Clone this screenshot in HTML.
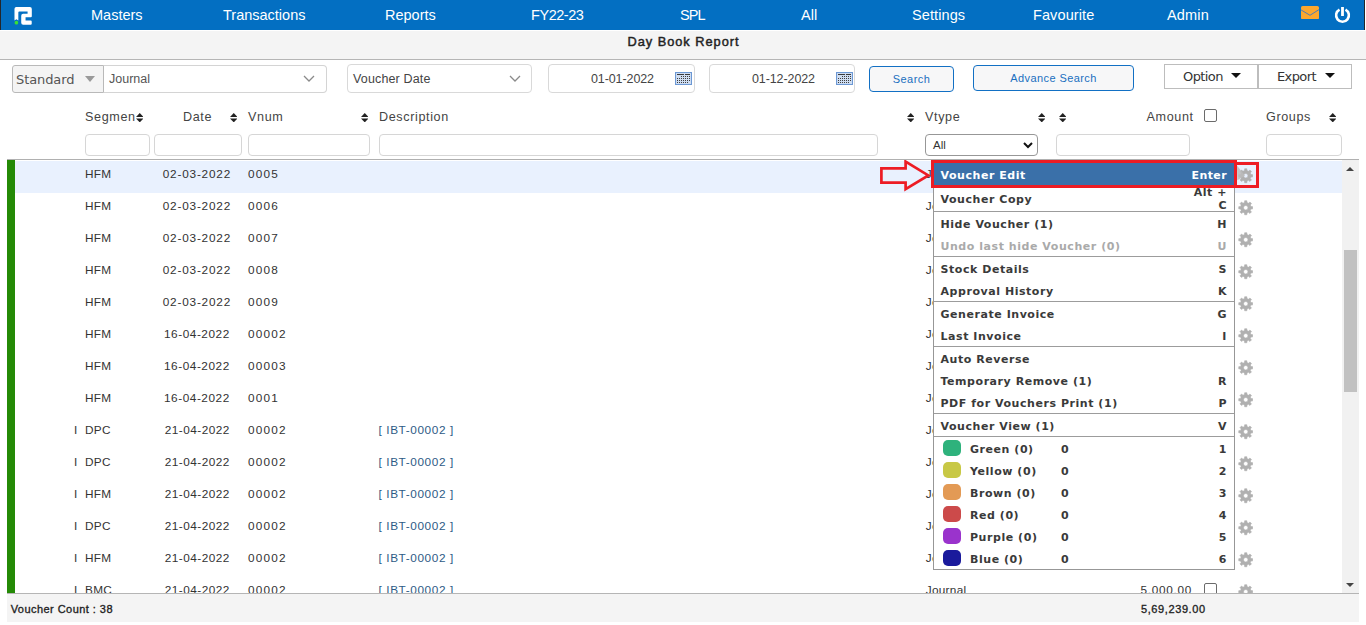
<!DOCTYPE html>
<html lang="en">
<head>
<meta charset="utf-8">
<title>Day Book Report</title>
<style>
*{box-sizing:border-box}
html,body{margin:0;padding:0}
body{width:1366px;height:625px;overflow:hidden;background:#fff;position:relative;font-family:"Liberation Sans",sans-serif;color:#333;font-size:12px}
.abs{position:absolute}
/* nav */
.nav{position:absolute;left:0;top:0;width:1365px;height:30px;background:#036fc2;border-left:1px solid #23262b;border-right:1px solid #23262b}
.nav span{position:absolute;top:0;height:30px;line-height:30px;color:#fff;font-size:14.5px;white-space:nowrap}
.nav svg{position:absolute}
.title{position:absolute;left:0;top:31px;width:1366px;height:29px;background:#f4f4f4;border-bottom:1px solid #b5b5b5;text-align:center;font-size:12.8px;letter-spacing:.98px;-webkit-text-stroke:.45px #222;line-height:22px;color:#222;padding-left:1px}
/* toolbar */
.box{position:absolute;border:1px solid #d4d4d4;border-radius:4px;background:#fff;height:28px;top:65px;font-size:12.5px;line-height:26px;color:#444;white-space:nowrap}
.std{left:12px;width:92px;background:#f4f4f4;border-color:#b9b9b9;border-radius:3px 0 0 3px;font-family:"DejaVu Sans",sans-serif;font-size:13px;padding-left:3px;letter-spacing:-.1px;color:#555;line-height:27px}
.chev{position:absolute;top:9px;width:10px;height:8px}
.btn{position:absolute;border:1px solid #1270c4;border-radius:4px;background:#f7f7f8;color:#1a6fc0;text-align:center;font-size:11px;letter-spacing:.42px;white-space:nowrap}
.obtn{position:absolute;top:64px;height:25px;border:1px solid #bdbdbd;background:#fff;font-family:"DejaVu Sans",sans-serif;font-size:13px;line-height:23px;color:#333;white-space:nowrap;letter-spacing:-.6px}
.obtn i{position:absolute;top:8px;width:0;height:0;border-left:5px solid transparent;border-right:5px solid transparent;border-top:5.500px solid #111}
.cal{position:absolute;top:7px;width:17px;height:13px}
/* header */
.h{position:absolute;top:108px;height:18px;line-height:18.500px;font-size:12.600px;color:#444;white-space:nowrap;letter-spacing:.62px}
.sort{position:absolute;top:113px;width:7.500px;height:9.400px}
.f{position:absolute;top:134px;height:22px;border:1px solid #d6d6d6;border-radius:4px;background:#fff}
.hline{position:absolute;left:7px;top:159px;width:1352px;height:1px;background:#b0b0b0}
.hcb{position:absolute;left:1204px;top:109px;width:13px;height:13px;border:1px solid #6b6b6b;border-radius:2px;background:#fff}
/* grid */
.grid{position:absolute;left:7px;top:160px;width:1335px;height:433px;overflow:hidden}
.gbar{position:absolute;left:0;top:0;width:8px;height:433px;background:#248a06}
.row{position:absolute;left:8px;width:1327px;height:32px}
.row.sel{background:linear-gradient(#fff 0,#fff 1px,#e9f1fe 1px);height:33px}
.c{position:absolute;top:6px;height:16px;line-height:16px;font-size:11.8px;color:#333;white-space:nowrap}
.pre{left:59px}
.seg{left:70px;letter-spacing:.3px}
.dt{left:131.500px;width:100px;text-align:center;letter-spacing:.8px;padding-left:.8px}
.dt.d16{letter-spacing:.55px;padding-left:.8px}
.dt.d21{letter-spacing:.47px;padding-left:1.500px}
.vn{left:233px;letter-spacing:1.2px}
.ds{left:363.500px;color:#2e5b86;letter-spacing:.6px}
.vt{left:910.700px;letter-spacing:.3px}
.am{right:150px;text-align:right;letter-spacing:.7px}
.cb{position:absolute;left:1189px;top:7px;width:13px;height:13px;border:1px solid #6b6b6b;border-radius:2px;background:#fff}
.gear{position:absolute;left:1222.600px;top:8px;width:15.500px;height:15.500px}
/* scrollbar */
.sb{position:absolute;left:1342px;top:160px;width:17px;height:433px;background:#f1f1f1}
.sb b{position:absolute;left:2px;top:90px;width:13px;height:142px;background:#c1c1c1}
.sb i{position:absolute;left:4px;width:0;height:0;border-left:4.5px solid transparent;border-right:4.5px solid transparent}
.sb i.u{top:7px;border-bottom:4.500px solid #444}
.sb i.d{bottom:6px;border-top:4.500px solid #444}
/* footer */
.foot{position:absolute;left:7px;top:593px;width:1352px;height:29px;background:#f4f4f4;border-top:1px solid #b5b5b5;font-size:11px;-webkit-text-stroke:.32px #222;color:#222}
.foot span{position:absolute;top:0;line-height:30px;white-space:nowrap}
/* context menu */
.menu{position:absolute;left:933px;top:162px;width:302px;height:408px;background:#fff;border:1px solid #979797;font-family:"DejaVu Sans",sans-serif;font-weight:bold;font-size:11px;letter-spacing:.55px;color:#3a3a3a}
.mi{position:absolute;left:0;width:300px;height:22px;line-height:22px;white-space:nowrap}
.mi .l{position:absolute;left:6.5px;top:1px}
.mi .k{position:absolute;right:7px;top:1px;text-align:right}
.mi.hi{background:#3a70a9;color:#fff}
.mi.dis{color:#aaa}
.sep{position:absolute;left:0;width:300px;height:1px;background:#9c9c9c}
.sw{position:absolute;left:9px;top:2px;width:18px;height:16px;border-radius:5px}
.mi .l2{position:absolute;left:36px;top:1px}
.mi .n{position:absolute;left:127px;top:1px}
/* annotations */
.red{position:absolute;border:3px solid #ed1c24}

.box.t{top:64px;height:29px;line-height:28px;border-color:#d9d9d9}

</style>
</head>
<body>
<svg width="0" height="0" style="position:absolute">
<defs>
<path id="g" fill="#b0b0b0" fill-rule="evenodd" stroke="#b0b0b0" stroke-width=".6" stroke-linejoin="round" d="M6.72 2.65 L6.86 0.79 L9.14 0.79 L9.28 2.65 L10.87 3.31 L12.29 2.09 L13.91 3.71 L12.69 5.13 L13.35 6.72 L15.21 6.86 L15.21 9.14 L13.35 9.28 L12.69 10.87 L13.91 12.29 L12.29 13.91 L10.87 12.69 L9.28 13.35 L9.14 15.21 L6.86 15.21 L6.72 13.35 L5.13 12.69 L3.71 13.91 L2.09 12.29 L3.31 10.87 L2.65 9.28 L0.79 9.14 L0.79 6.86 L2.65 6.72 L3.31 5.13 L2.09 3.71 L3.71 2.09 L5.13 3.31Z M5.70 8a2.3 2.3 0 1 0 4.6 0a2.3 2.3 0 1 0 -4.6 0z"/>
<g id="sarrow"><path d="M4 0 8 4.200H0z" fill="#222"/><path d="M0 5.800h8L4 10z" fill="#222"/></g>
</defs>
</svg>
<div class="nav">
<svg style="left:13px;top:7px" width="18.300" height="17.700" viewBox="0 0 19 18" preserveAspectRatio="none"><path d="M2 0h14.500a2 2 0 0 1 2 2v7.500a1 1 0 0 1-1 1H12v3.200h5.400a1 1 0 0 1 1 1V17a1 1 0 0 1-1 1H9.500a2 2 0 0 1-2-2V8.800a2 2 0 0 1 2-2h4.600V4.500H5.500a1 1 0 0 0-1 1v8.200l-2-1.300-2 1.300V2A2 2 0 0 1 2 0z" fill="#fff"/><circle cx="2.500" cy="16" r="1.900" fill="#3be034"/></svg>
<span style="left:90px">Masters</span>
<span style="left:222px">Transactions</span>
<span style="left:384px">Reports</span>
<span style="left:530px;letter-spacing:-.45px">FY22-23</span>
<span style="left:679px;letter-spacing:-.9px">SPL</span>
<span style="left:800px">All</span>
<span style="left:911px;letter-spacing:.1px">Settings</span>
<span style="left:1032px;letter-spacing:.1px">Favourite</span>
<span style="left:1166px;letter-spacing:.15px">Admin</span>
<svg style="left:1300px;top:5.600px" width="18" height="13.400" viewBox="0 0 18 13.400"><rect width="18" height="13.400" rx="1.600" fill="#fca72e"/><path d="M0 3.900 9 9.300 18 3.600" fill="none" stroke="#3a78c4" stroke-width=".9"/></svg>
<svg style="left:1333px;top:6px" width="17" height="18" viewBox="0 0 17 18"><path d="M5.500 3.650A6.400 6.400 0 1 0 11.500 3.650" fill="none" stroke="#fff" stroke-width="2.600"/><rect x="7.100" y="1" width="2.800" height="9" fill="#fff"/></svg>
</div>
<div class="title">Day Book Report</div>

<div class="box std">Standard<svg class="chev" style="left:72px;top:10px" viewBox="0 0 10 8"><path d="M0 0h10L5 6z" fill="#9a9a9a"/></svg></div>
<div class="box" style="left:104px;width:223px;padding-left:5px;border-radius:0 4px 4px 0;border-left:0;color:#555">Journal<svg class="chev" style="left:199px;top:9px;width:12px" viewBox="0 0 12 8"><path d="M1 1l5 5 5-5" fill="none" stroke="#8a8a8a" stroke-width="1.300"/></svg></div>
<div class="box t" style="left:347px;width:185px;padding-left:5px;letter-spacing:.15px">Voucher Date<svg class="chev" style="left:161px;top:10px;width:12px" viewBox="0 0 12 8"><path d="M1 1l5 5 5-5" fill="none" stroke="#8a8a8a" stroke-width="1.300"/></svg></div>
<div class="box t" style="left:548px;width:147px;padding-left:42px;letter-spacing:-.1px">01-01-2022<svg class="cal" style="left:126px" viewBox="0 0 17 13"><rect x=".5" y=".5" width="16" height="12" fill="#cddcf1" stroke="#6c98d4"/><path d="M2 2.500h7M10 2.500h5" stroke="#3a3a3a" stroke-width="1" fill="none"/><path d="M6 4.500h10M2 6.500h14M2 8.500h14M2 10.500h12" stroke="#3f3f3f" stroke-width="1" stroke-dasharray="1 1" fill="none"/></svg></div>
<div class="box t" style="left:709px;width:146px;padding-left:42px;letter-spacing:-.1px">01-12-2022<svg class="cal" style="left:126px" viewBox="0 0 17 13"><rect x=".5" y=".5" width="16" height="12" fill="#cddcf1" stroke="#6c98d4"/><path d="M2 2.500h7M10 2.500h5" stroke="#3a3a3a" stroke-width="1" fill="none"/><path d="M6 4.500h10M2 6.500h14M2 8.500h14M2 10.500h12" stroke="#3f3f3f" stroke-width="1" stroke-dasharray="1 1" fill="none"/></svg></div>
<div class="btn" style="left:869px;top:66px;width:85px;height:26px;line-height:25px">Search</div>
<div class="btn" style="left:973px;top:65px;width:161px;height:26px;line-height:24.500px">Advance Search</div>
<div class="obtn" style="left:1164px;width:94px;padding-left:18px">Option<i style="left:66px"></i></div>
<div class="obtn" style="left:1258px;width:94px;padding-left:18px">Export<i style="left:66px"></i></div>

<span class="h" style="left:85px">Segmen</span>
<span class="h" style="left:183px">Date</span>
<span class="h" style="left:248px">Vnum</span>
<span class="h" style="left:379px">Description</span>
<span class="h" style="left:925px">Vtype</span>
<span class="h" style="left:1146.500px">Amount</span>
<span class="h" style="left:1266px">Groups</span>
<svg class="sort" style="left:135.700px" viewBox="0 0 8 10"><use href="#sarrow"/></svg>
<svg class="sort" style="left:229.700px" viewBox="0 0 8 10"><use href="#sarrow"/></svg>
<svg class="sort" style="left:360.500px" viewBox="0 0 8 10"><use href="#sarrow"/></svg>
<svg class="sort" style="left:906.700px" viewBox="0 0 8 10"><use href="#sarrow"/></svg>
<svg class="sort" style="left:1037.700px" viewBox="0 0 8 10"><use href="#sarrow"/></svg>
<svg class="sort" style="left:1058.700px" viewBox="0 0 8 10"><use href="#sarrow"/></svg>
<svg class="sort" style="left:1328.700px" viewBox="0 0 8 10"><use href="#sarrow"/></svg>
<span class="hcb"></span>
<div class="f" style="left:85px;width:65px"></div>
<div class="f" style="left:154px;width:88px"></div>
<div class="f" style="left:248px;width:122px"></div>
<div class="f" style="left:379px;width:499px"></div>
<div class="f" style="left:925px;width:113px;border-color:#979797;font-size:11.500px;line-height:20px;padding-left:7px;color:#333">All<svg class="abs" style="left:97px;top:6.500px" width="10" height="7" viewBox="0 0 10 7"><path d="M1 1l4 4 4-4" fill="none" stroke="#111" stroke-width="2"/></svg></div>
<div class="f" style="left:1056px;width:134px"></div>
<div class="f" style="left:1266px;width:76px"></div>
<div class="hline"></div>
<div class="grid">
<div class="gbar"></div>
<div class="row sel" style="top:0px"><span class="c seg">HFM</span><span class="c dt">02-03-2022</span><span class="c vn">0005</span><span class="c vt">Journal</span><span class="c am">5,000.00</span><span class="cb"></span><svg class="gear" viewBox="0 0 16 16"><use href="#g"/></svg></div>
<div class="row" style="top:32px"><span class="c seg">HFM</span><span class="c dt">02-03-2022</span><span class="c vn">0006</span><span class="c vt">Journal</span><span class="c am">5,000.00</span><span class="cb"></span><svg class="gear" viewBox="0 0 16 16"><use href="#g"/></svg></div>
<div class="row" style="top:64px"><span class="c seg">HFM</span><span class="c dt">02-03-2022</span><span class="c vn">0007</span><span class="c vt">Journal</span><span class="c am">5,000.00</span><span class="cb"></span><svg class="gear" viewBox="0 0 16 16"><use href="#g"/></svg></div>
<div class="row" style="top:96px"><span class="c seg">HFM</span><span class="c dt">02-03-2022</span><span class="c vn">0008</span><span class="c vt">Journal</span><span class="c am">5,000.00</span><span class="cb"></span><svg class="gear" viewBox="0 0 16 16"><use href="#g"/></svg></div>
<div class="row" style="top:128px"><span class="c seg">HFM</span><span class="c dt">02-03-2022</span><span class="c vn">0009</span><span class="c vt">Journal</span><span class="c am">5,000.00</span><span class="cb"></span><svg class="gear" viewBox="0 0 16 16"><use href="#g"/></svg></div>
<div class="row" style="top:160px"><span class="c seg">HFM</span><span class="c dt d16">16-04-2022</span><span class="c vn">00002</span><span class="c vt">Journal</span><span class="c am">5,000.00</span><span class="cb"></span><svg class="gear" viewBox="0 0 16 16"><use href="#g"/></svg></div>
<div class="row" style="top:192px"><span class="c seg">HFM</span><span class="c dt d16">16-04-2022</span><span class="c vn">00003</span><span class="c vt">Journal</span><span class="c am">5,000.00</span><span class="cb"></span><svg class="gear" viewBox="0 0 16 16"><use href="#g"/></svg></div>
<div class="row" style="top:224px"><span class="c seg">HFM</span><span class="c dt d16">16-04-2022</span><span class="c vn">0001</span><span class="c vt">Journal</span><span class="c am">5,000.00</span><span class="cb"></span><svg class="gear" viewBox="0 0 16 16"><use href="#g"/></svg></div>
<div class="row" style="top:256px"><span class="c pre">I</span><span class="c seg">DPC</span><span class="c dt d21">21-04-2022</span><span class="c vn">00002</span><span class="c ds">[ IBT-00002 ]</span><span class="c vt">Journal</span><span class="c am">5,000.00</span><span class="cb"></span><svg class="gear" viewBox="0 0 16 16"><use href="#g"/></svg></div>
<div class="row" style="top:288px"><span class="c pre">I</span><span class="c seg">DPC</span><span class="c dt d21">21-04-2022</span><span class="c vn">00002</span><span class="c ds">[ IBT-00002 ]</span><span class="c vt">Journal</span><span class="c am">5,000.00</span><span class="cb"></span><svg class="gear" viewBox="0 0 16 16"><use href="#g"/></svg></div>
<div class="row" style="top:320px"><span class="c pre">I</span><span class="c seg">HFM</span><span class="c dt d21">21-04-2022</span><span class="c vn">00002</span><span class="c ds">[ IBT-00002 ]</span><span class="c vt">Journal</span><span class="c am">5,000.00</span><span class="cb"></span><svg class="gear" viewBox="0 0 16 16"><use href="#g"/></svg></div>
<div class="row" style="top:352px"><span class="c pre">I</span><span class="c seg">DPC</span><span class="c dt d21">21-04-2022</span><span class="c vn">00002</span><span class="c ds">[ IBT-00002 ]</span><span class="c vt">Journal</span><span class="c am">5,000.00</span><span class="cb"></span><svg class="gear" viewBox="0 0 16 16"><use href="#g"/></svg></div>
<div class="row" style="top:384px"><span class="c pre">I</span><span class="c seg">HFM</span><span class="c dt d21">21-04-2022</span><span class="c vn">00002</span><span class="c ds">[ IBT-00002 ]</span><span class="c vt">Journal</span><span class="c am">5,000.00</span><span class="cb"></span><svg class="gear" viewBox="0 0 16 16"><use href="#g"/></svg></div>
<div class="row" style="top:416px"><span class="c pre">I</span><span class="c seg">BMC</span><span class="c dt d21">21-04-2022</span><span class="c vn">00002</span><span class="c ds">[ IBT-00002 ]</span><span class="c vt">Journal</span><span class="c am">5,000.00</span><span class="cb"></span><svg class="gear" viewBox="0 0 16 16"><use href="#g"/></svg></div>
</div>
<div class="sb"><i class="u"></i><b></b><i class="d"></i></div>
<div class="foot"><span style="left:3.700px;letter-spacing:.45px">Voucher Count : 38</span><span style="left:1134px;letter-spacing:.6px">5,69,239.00</span></div>

<div class="menu">
<div class="mi hi" style="top:0;height:24px;line-height:23px"><span class="l">Voucher Edit</span><span class="k" style="letter-spacing:.4px">Enter</span></div>
<div class="mi" style="top:24px;height:24px;line-height:24px"><span class="l">Voucher Copy</span><span class="k" style="top:0;line-height:12.500px;width:40px;white-space:normal">Alt + C</span></div>
<div class="sep" style="top:48px"></div>
<div class="mi" style="top:50px"><span class="l">Hide Voucher (1)</span><span class="k">H</span></div>
<div class="mi dis" style="top:72px"><span class="l">Undo last hide Voucher (0)</span><span class="k">U</span></div>
<div class="sep" style="top:93px"></div>
<div class="mi" style="top:95px"><span class="l">Stock Details</span><span class="k">S</span></div>
<div class="mi" style="top:117px"><span class="l">Approval History</span><span class="k">K</span></div>
<div class="sep" style="top:138px"></div>
<div class="mi" style="top:140px"><span class="l">Generate Invoice</span><span class="k">G</span></div>
<div class="mi" style="top:162px"><span class="l">Last Invoice</span><span class="k">I</span></div>
<div class="sep" style="top:183px"></div>
<div class="mi" style="top:185px"><span class="l">Auto Reverse</span></div>
<div class="mi" style="top:207px"><span class="l">Temporary Remove (1)</span><span class="k">R</span></div>
<div class="mi" style="top:229px"><span class="l">PDF for Vouchers Print (1)</span><span class="k">P</span></div>
<div class="sep" style="top:250px"></div>
<div class="mi" style="top:252px"><span class="l">Voucher View (1)</span><span class="k">V</span></div>
<div class="sep" style="top:273px"></div>
<div class="mi" style="top:275px"><i class="sw" style="background:#2eb27c"></i><span class="l2">Green (0)</span><span class="n">0</span><span class="k">1</span></div>
<div class="mi" style="top:297px"><i class="sw" style="background:#c8c845"></i><span class="l2">Yellow (0)</span><span class="n">0</span><span class="k">2</span></div>
<div class="mi" style="top:319px"><i class="sw" style="background:#e39a55"></i><span class="l2">Brown (0)</span><span class="n">0</span><span class="k">3</span></div>
<div class="mi" style="top:341px"><i class="sw" style="background:#cc4a4a"></i><span class="l2">Red (0)</span><span class="n">0</span><span class="k">4</span></div>
<div class="mi" style="top:363px"><i class="sw" style="background:#9a33cc"></i><span class="l2">Purple (0)</span><span class="n">0</span><span class="k">5</span></div>
<div class="mi" style="top:385px"><i class="sw" style="background:#1a1a9c"></i><span class="l2">Blue (0)</span><span class="n">0</span><span class="k">6</span></div>
</div>
<svg class="abs" style="left:1236px;top:164px" width="10" height="18" viewBox="0 0 10 18"><path d="M1 1.500 9 11.800 1.300 16.200z" fill="#bcbcbc" fill-opacity=".85"/></svg>
<div class="red" style="left:931px;top:160px;width:306px;height:28px"></div>
<div class="red" style="left:1234px;top:162px;width:25px;height:26px"></div>
<svg class="abs" style="left:878px;top:160px" width="56" height="32" viewBox="0 0 56 32"><path d="M3.400 8.400H27.600V1.600L50.300 15.400 27.600 29.200V22.600H3.400z" fill="none" stroke="#ed1c24" stroke-width="2.700" stroke-linejoin="miter"/></svg>
</body>
</html>
